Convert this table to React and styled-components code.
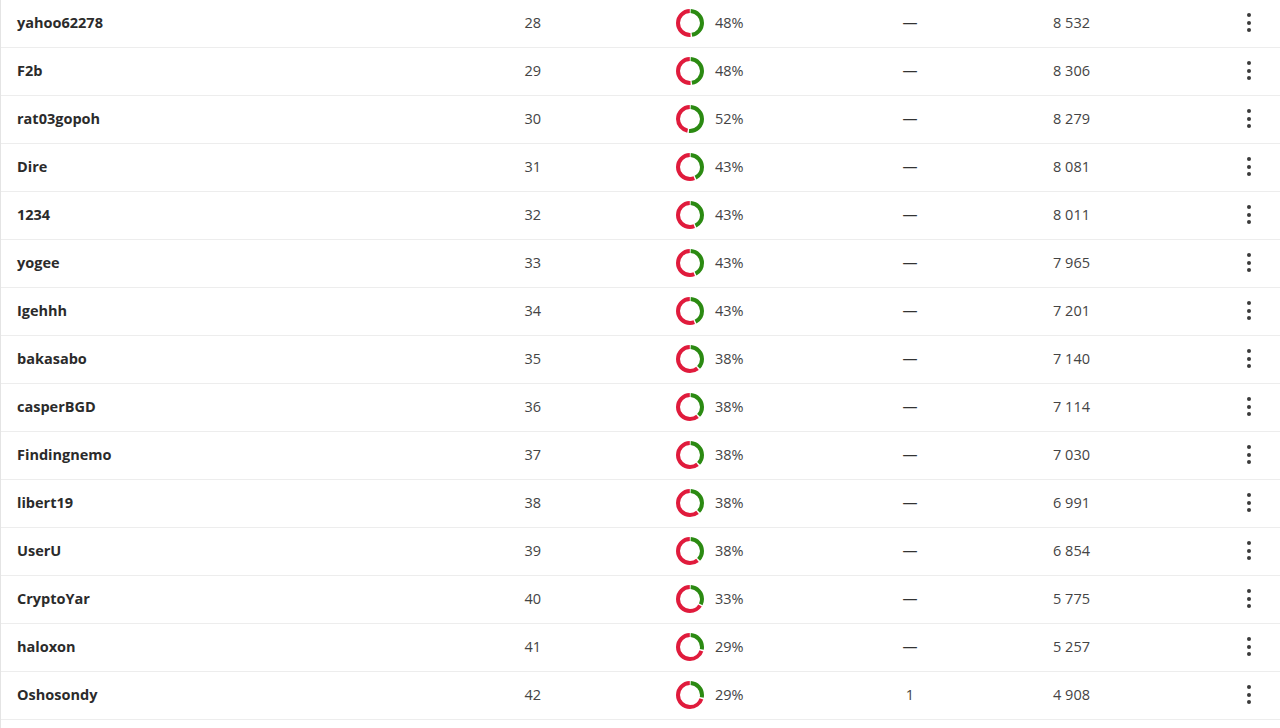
import React from 'react';
import styled, { createGlobalStyle } from 'styled-components';

const GlobalStyle = createGlobalStyle`
  html, body {
    margin: 0;
    padding: 0;
    background: #ffffff;
    overflow: hidden;
  }
  body {
    font-family: "Open Sans", "Liberation Sans", sans-serif;
    color: #2b2b2b;
  }
`;

const Table = styled.div`
  min-height: 100vh;
  border-left: 1px solid #e4e4e4;
  box-sizing: border-box;
`;

const Row = styled.div`
  display: grid;
  grid-template-columns: 379px 145px 135px 170px 128px 116px 1fr;
  align-items: center;
  box-sizing: border-box;
  height: 48px;
  padding: 0 0 2px 16px;
  border-bottom: 1px solid #ededed;
`;

const Name = styled.div`
  font-size: 14.5px;
  font-weight: 700;
  color: #2b2b2b;
  white-space: nowrap;
`;

const Num = styled.div`
  font-size: 14.5px;
  font-weight: 400;
  color: #444;
  text-align: ${(p) => p.$align || 'right'};
`;

const Dash = styled.div`
  font-size: 15px;
  color: #333;
  text-align: center;
  margin-top: -2px;
`;

const WinCell = styled.div`
  display: flex;
  align-items: center;
  gap: 11px;
`;

const Percent = styled.span`
  font-size: 14.5px;
  font-weight: 400;
  color: #444;
`;

const Menu = styled.button`
  justify-self: end;
  margin-right: 29px;
  border: none;
  background: none;
  padding: 4px 0;
  display: flex;
  flex-direction: column;
  gap: 3.5px;
  cursor: pointer;
`;

const Dot = styled.span`
  width: 4px;
  height: 4px;
  border-radius: 50%;
  background: #3a3a3a;
`;

const Spacer = styled.div``;

const RED = '#e01b3c';
const GREEN = '#2b8a12';

function Donut({ value }) {
  const r = 12;
  const c = 2 * Math.PI * r;
  const gap = 1.4;
  const green = (value / 100) * c;
  return (
    <svg width="28" height="28" viewBox="0 0 28 28">
      <g transform="rotate(-90 14 14)">
        <circle
          cx="14" cy="14" r={r} fill="none" stroke={GREEN} strokeWidth="4"
          strokeDasharray={`${green - gap} ${c}`}
          strokeDashoffset={-gap / 2}
        />
        <circle
          cx="14" cy="14" r={r} fill="none" stroke={RED} strokeWidth="4"
          strokeDasharray={`${c - green - gap} ${c}`}
          strokeDashoffset={-(green + gap / 2)}
        />
      </g>
    </svg>
  );
}

const rows = [
  ['yahoo62278', 28, 48, null, '8 532'],
  ['F2b', 29, 48, null, '8 306'],
  ['rat03gopoh', 30, 52, null, '8 279'],
  ['Dire', 31, 43, null, '8 081'],
  ['1234', 32, 43, null, '8 011'],
  ['yogee', 33, 43, null, '7 965'],
  ['Igehhh', 34, 43, null, '7 201'],
  ['bakasabo', 35, 38, null, '7 140'],
  ['casperBGD', 36, 38, null, '7 114'],
  ['Findingnemo', 37, 38, null, '7 030'],
  ['libert19', 38, 38, null, '6 991'],
  ['UserU', 39, 38, null, '6 854'],
  ['CryptoYar', 40, 33, null, '5 775'],
  ['haloxon', 41, 29, null, '5 257'],
  ['Oshosondy', 42, 29, '1', '4 908'],
];

export default function App() {
  return (
    <>
      <GlobalStyle />
      <Table>
        {rows.map(([name, rank, win, extra, score]) => (
          <Row key={name}>
            <Name>{name}</Name>
            <Num>{rank}</Num>
            <Spacer />
            <WinCell>
              <Donut value={win} />
              <Percent>{win}%</Percent>
            </WinCell>
            {extra ? <Num $align="center">{extra}</Num> : <Dash>—</Dash>}
            <Num>{score.replace(' ', '\u00A0')}</Num>
            <Menu aria-label="more">
              <Dot />
              <Dot />
              <Dot />
            </Menu>
          </Row>
        ))}
      </Table>
    </>
  );
}
